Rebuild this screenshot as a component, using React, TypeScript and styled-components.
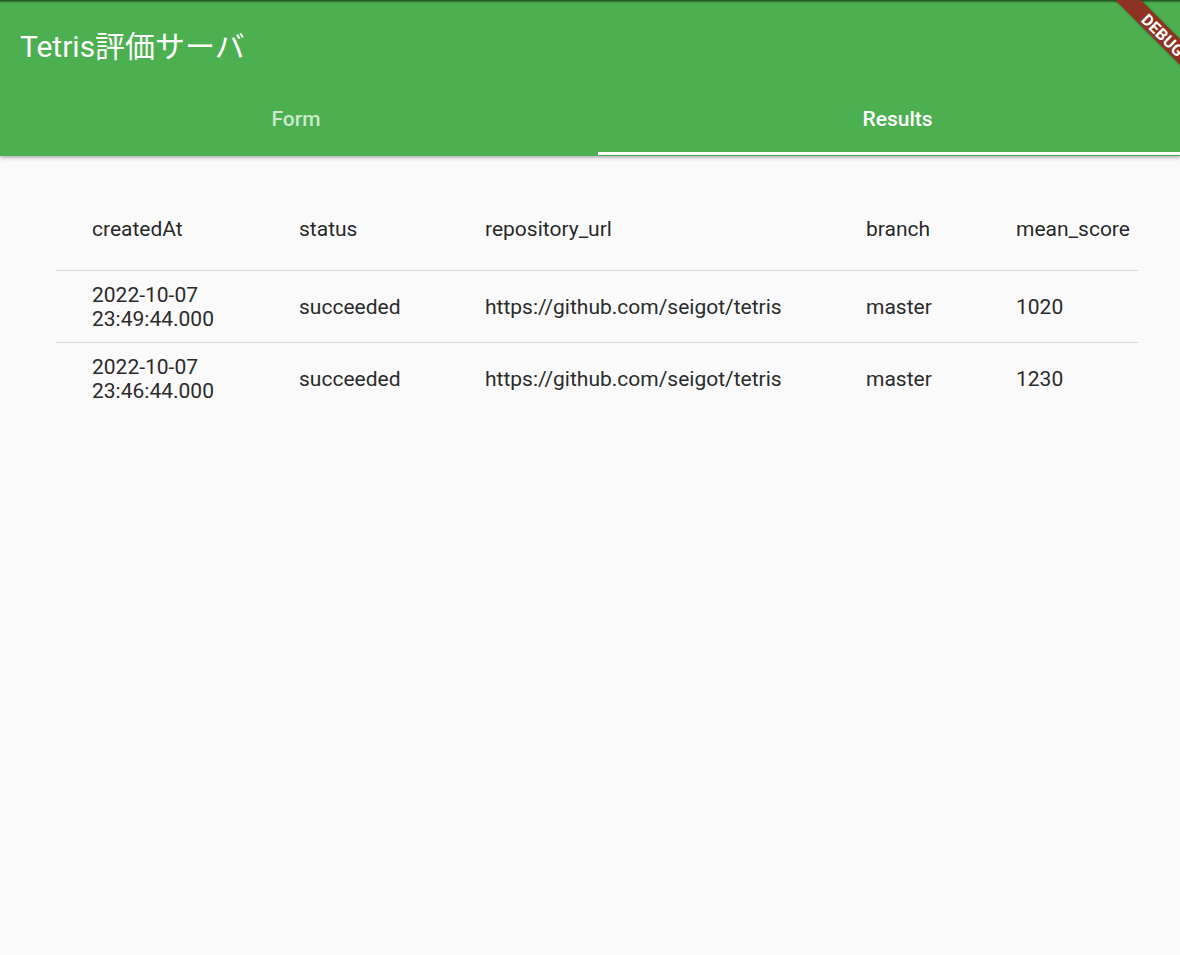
import React from "react";
import styled, { createGlobalStyle } from "styled-components";

const GlobalStyle = createGlobalStyle`
  html, body {
    margin: 0;
    padding: 0;
    background: #fafafa;
    font-family: Roboto, "Noto Sans CJK JP", sans-serif;
  }
`;

const Page = styled.div`
  position: relative;
  width: 1180px;
  height: 955px;
  overflow: hidden;
  background: #fafafa;
`;

const AppBar = styled.header`
  background: linear-gradient(to bottom, #1e4a20 0px, #4caf50 3px);
  box-shadow: 0 2px 4px rgba(0, 0, 0, 0.22), 0 1px 2px rgba(0, 0, 0, 0.12);
  color: #fff;
  position: relative;
  z-index: 1;
`;

const Toolbar = styled.div`
  height: 88px;
  display: flex;
  align-items: center;
  padding-left: 20px;
`;

const Title = styled.h1`
  margin: 0;
  font-size: 30px;
  font-weight: 400;
  font-family: Roboto, "Noto Sans CJK JP", sans-serif;
  letter-spacing: 0;
`;

const TabBar = styled.nav`
  height: 68px;
  display: grid;
  grid-template-columns: 598px 1fr;
`;

const Tab = styled.div<{ $active?: boolean; $shift: number }>`
  display: flex;
  align-items: center;
  justify-content: center;
  padding-bottom: 3px;
  padding-left: ${(p) => (p.$shift > 0 ? p.$shift : 0)}px;
  padding-right: ${(p) => (p.$shift < 0 ? -p.$shift : 0)}px;
  font-size: 21px;
  font-weight: 500;
  color: ${(p) => (p.$active ? "#ffffff" : "rgba(255, 255, 255, 0.72)")};
  border-bottom: 3px solid ${(p) => (p.$active ? "#ffffff" : "transparent")};
  margin-bottom: 1px;
`;

const Content = styled.main`
  padding: 31px 42px 0 56px;
`;

const Table = styled.div`
  width: 1082px;
`;

const Row = styled.div<{ $head?: boolean }>`
  display: grid;
  grid-template-columns: 243px 186px 381px 150px 122px;
  height: ${(p) => (p.$head ? "83px" : "71px")};
  align-items: center;
  border-top: ${(p) => (p.$head ? "none" : "1px solid #d9d9d9")};
  font-size: 21px;
  line-height: 24px;
  color: ${(p) => (p.$head ? "rgba(0, 0, 0, 0.87)" : "#2b2b2b")};
`;

const Cell = styled.div<{ $first?: boolean }>`
  padding-left: ${(p) => (p.$first ? "36px" : "0")};
  white-space: nowrap;
`;

const Banner = styled.div`
  position: absolute;
  top: 26px;
  left: 1063px;
  width: 200px;
  height: 18px;
  background: #8e3324;
  color: #fff;
  font-size: 16px;
  font-weight: 700;
  letter-spacing: 0.3px;
  display: flex;
  align-items: center;
  justify-content: center;
  transform: rotate(45deg);
  z-index: 5;
  box-shadow: 0 0 3px rgba(0, 0, 0, 0.35);
`;

const columns = ["createdAt", "status", "repository_url", "branch", "mean_score"];

const results = [
  {
    createdAt: ["2022-10-07", "23:49:44.000"],
    status: "succeeded",
    url: "https://github.com/seigot/tetris",
    branch: "master",
    score: 1020,
  },
  {
    createdAt: ["2022-10-07", "23:46:44.000"],
    status: "succeeded",
    url: "https://github.com/seigot/tetris",
    branch: "master",
    score: 1230,
  },
];

const App = () => {
  return (
    <Page>
      <GlobalStyle />
      <AppBar>
        <Toolbar>
          <Title>Tetris評価サーバ</Title>
        </Toolbar>
        <TabBar>
          <Tab $shift={-6}>Form</Tab>
          <Tab $active $shift={17}>
            Results
          </Tab>
        </TabBar>
      </AppBar>
      <Content>
        <Table>
          <Row $head>
            {columns.map((c, i) => (
              <Cell key={c} $first={i === 0}>
                {c}
              </Cell>
            ))}
          </Row>
          {results.map((r, i) => (
            <Row key={i}>
              <Cell $first>
                {r.createdAt[0]}
                <br />
                {r.createdAt[1]}
              </Cell>
              <Cell>{r.status}</Cell>
              <Cell>{r.url}</Cell>
              <Cell>{r.branch}</Cell>
              <Cell>{r.score}</Cell>
            </Row>
          ))}
        </Table>
      </Content>
      <Banner>DEBUG</Banner>
    </Page>
  );
};

export default App;
